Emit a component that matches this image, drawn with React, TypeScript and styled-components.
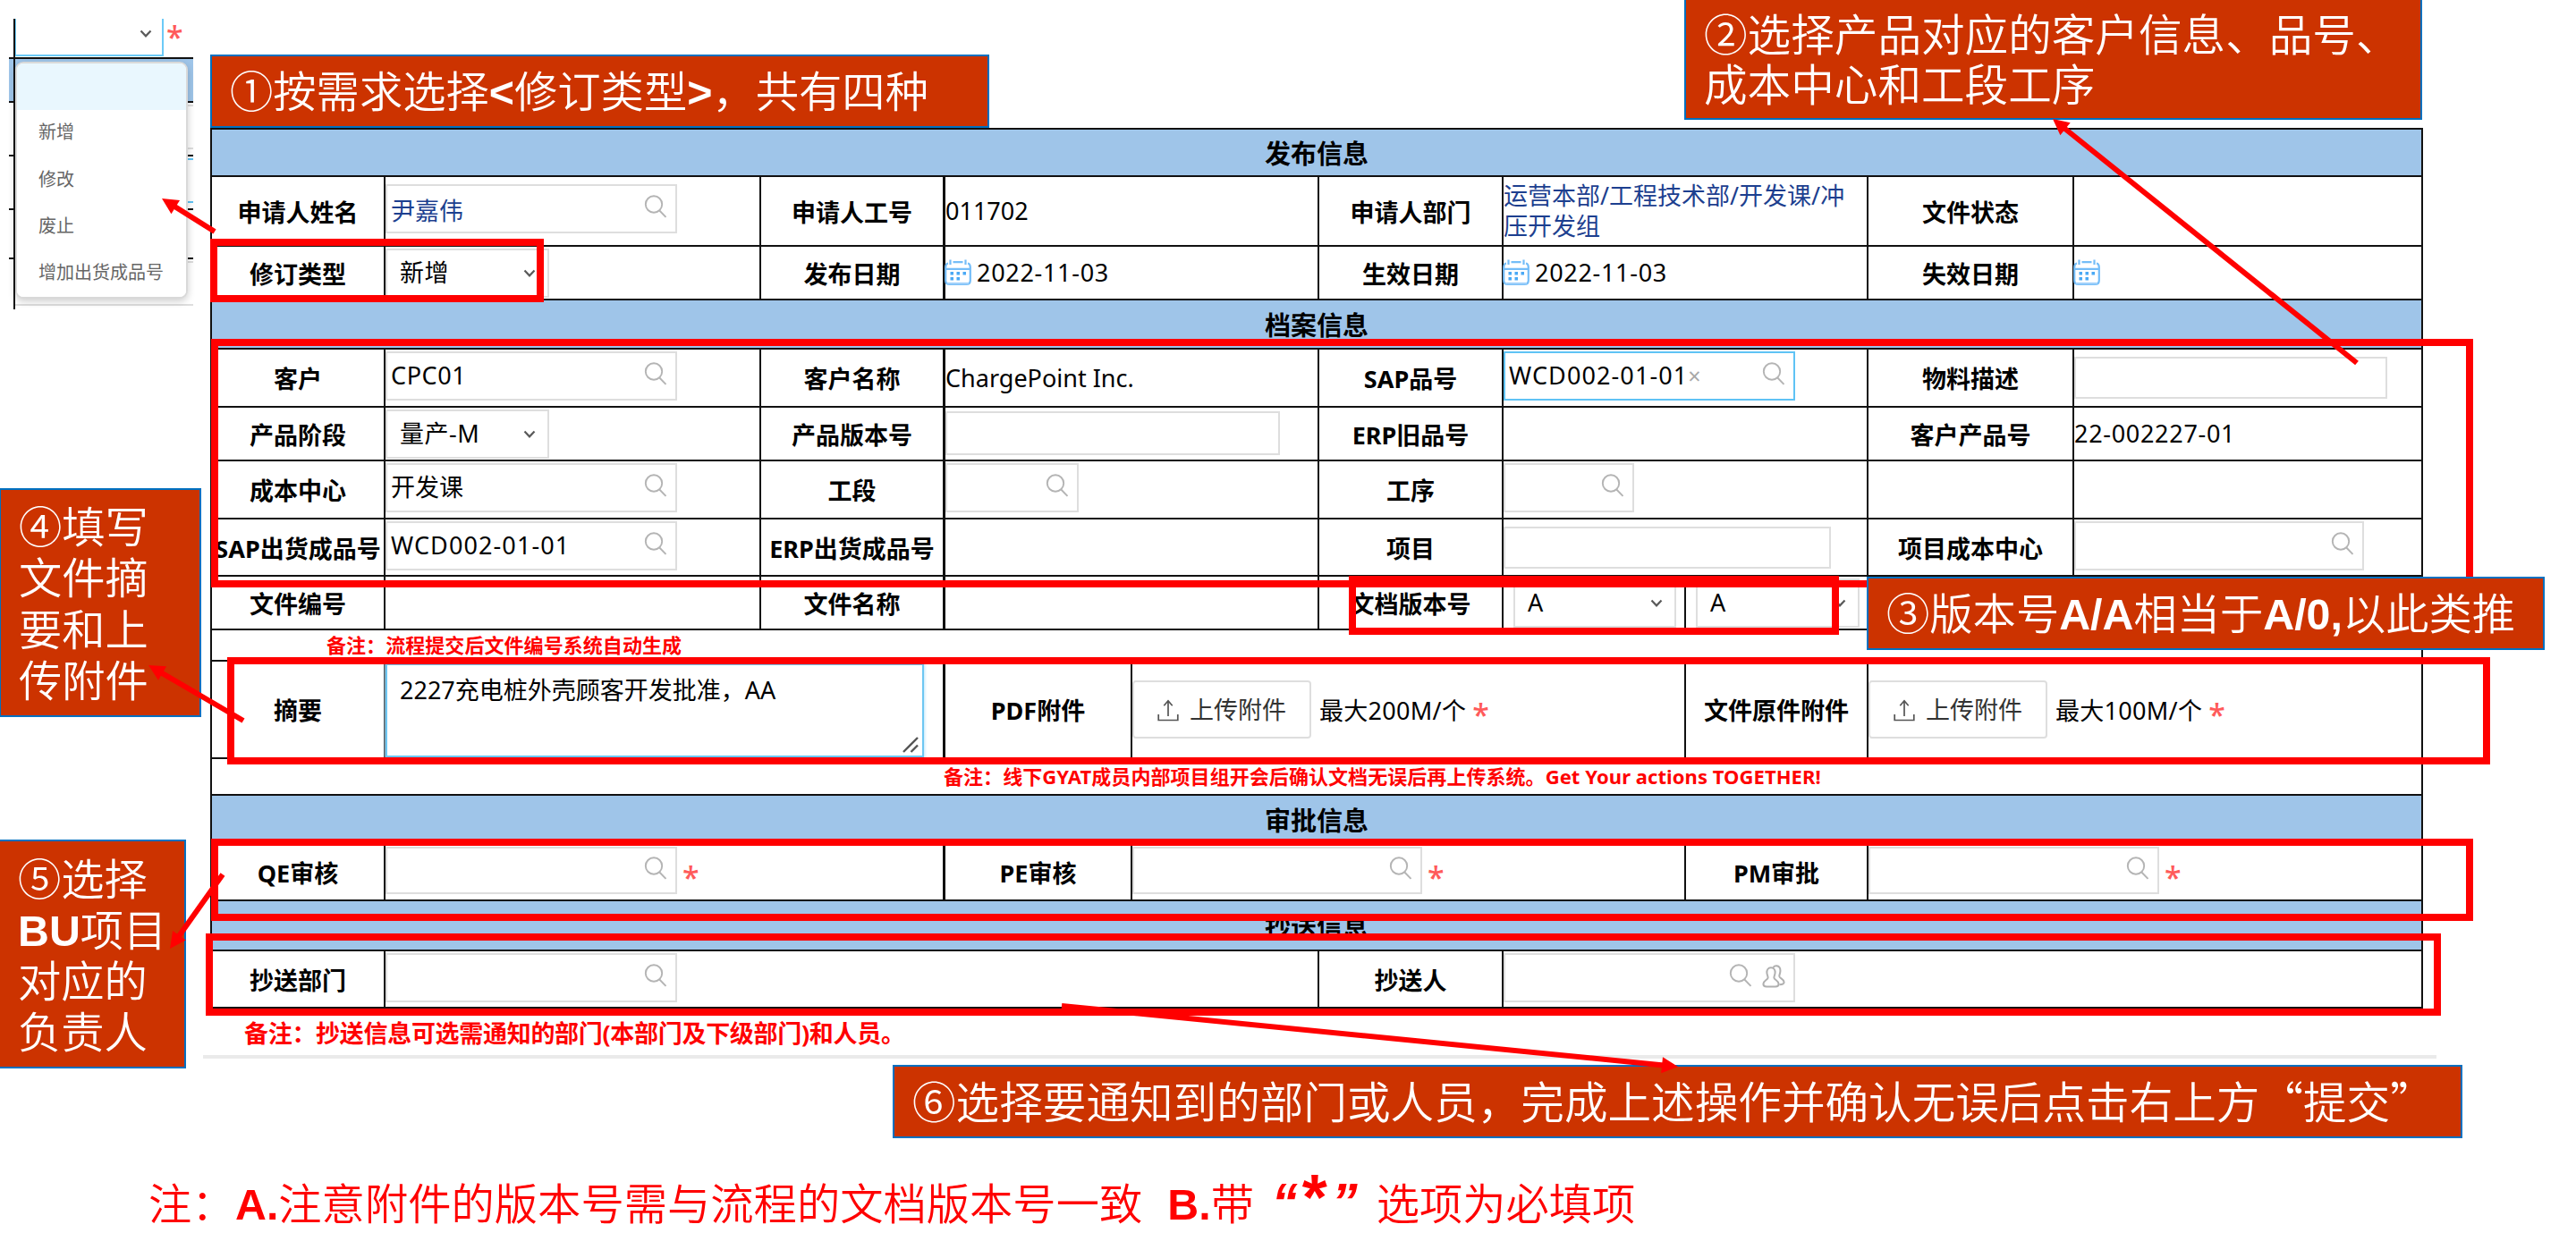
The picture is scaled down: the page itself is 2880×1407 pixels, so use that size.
import React from 'react';
import styled, { createGlobalStyle } from 'styled-components';

const GlobalStyle = createGlobalStyle`
  * { box-sizing: border-box; }
  body { margin: 0; background: #fff; }
`;

const FORM_FONT = `"Noto Sans", "Noto Sans CJK SC", sans-serif`;
const CJK_FONT = `"Noto Sans CJK SC", sans-serif`;
const RED = '#ff0000';
const BLUE_TEXT = '#1d3f8f';

const Page = styled.main`
  position: relative;
  width: 2880px;
  height: 1407px;
  overflow: hidden;
  padding: 143px 0 0 235px;
  font-family: ${FORM_FONT};
  font-size: 27px;
  line-height: 34px;
  color: #000;
  white-space: nowrap;
`;

/* ---------- form sheet ---------- */

const Sheet = styled.section`
  width: 2474px;
  border-left: 2px solid #111;
  border-top: 2px solid #111;
`;

const Row = styled.div<{ $h: number; $cols?: string }>`
  display: grid;
  grid-template-columns: ${(p) => p.$cols || '194px 420px 206px 418px 206px 408px 230px 390px'};
  height: ${(p) => p.$h}px;
`;

const Cell = styled.div<{ $line?: number; $color?: string }>`
  display: flex;
  align-items: center;
  min-width: 0;
  border-right: ${(p) => p.$line || 2}px solid #111;
  border-bottom: 2px solid #111;
  color: ${(p) => p.$color || '#000'};
`;

const Label = styled(Cell)`
  justify-content: center;
  padding-top: 3px;
  font-weight: 700;
`;

const Code = styled.span`
  letter-spacing: 0.7px;
`;

const Section = styled.h2<{ $h: number }>`
  display: flex;
  align-items: center;
  justify-content: center;
  margin: 0;
  padding-top: 3px;
  height: ${(p) => p.$h}px;
  background: #9fc5e9;
  border-right: 2px solid #111;
  border-bottom: 2px solid #111;
  font-size: 29px;
  font-weight: 700;
`;

const Remark = styled.div<{ $h: number; $gap: number }>`
  display: flex;
  align-items: center;
  height: ${(p) => p.$h}px;
  padding: 0 0 2px ${(p) => p.$gap}px;
  border-right: 2px solid #111;
  border-bottom: 2px solid #111;
  color: ${RED};
  font-size: 22px;
  font-weight: 700;
  letter-spacing: 0.06px;
`;

const Field = styled.div<{ $w: number; $h: number; $top: number; $left?: number; $focus?: boolean; $pad?: number }>`
  display: flex;
  align-self: flex-start;
  align-items: center;
  flex: none;
  width: ${(p) => p.$w}px;
  height: ${(p) => p.$h}px;
  margin-top: ${(p) => p.$top}px;
  margin-left: ${(p) => p.$left || 0}px;
  padding: 0 9px 0 ${(p) => p.$pad || 4}px;
  border: 2px solid ${(p) => (p.$focus ? '#5fc3f5' : '#dedede')};
  background: #fff;
`;

const Grow = styled.span<{ $color?: string; $dy?: number; $ls?: number }>`
  flex: 1;
  padding-top: ${(p) => p.$dy || 0}px;
  margin-bottom: 2px;
  color: ${(p) => p.$color || 'inherit'};
  letter-spacing: ${(p) => p.$ls || 0}px;
`;

const Clear = styled.span`
  color: #a8a8a8;
  font-size: 25px;
`;

const StarMark = styled.span<{ $left?: number; $top?: number }>`
  margin: ${(p) => p.$top ?? 11}px 0 0 ${(p) => p.$left ?? 6}px;
  color: #ff5a5a;
  font-size: 34px;
  font-weight: 500;
`;

const Star = ({ left, top }: { left?: number; top?: number }) => (
  <StarMark $left={left} $top={top}>*</StarMark>
);

const TextArea = styled.div`
  display: flex;
  align-self: flex-start;
  justify-content: space-between;
  align-items: flex-end;
  width: 602px;
  height: 105px;
  margin-top: 2px;
  padding: 11px 4px 3px 14px;
  border: 2px solid #6cc6f2;
  box-shadow: 0 0 3px 1px #bfe6fb;
`;

const AreaText = styled.span`
  align-self: flex-start;
`;

const Upload = styled.div`
  display: flex;
  align-items: center;
  gap: 12px;
  width: 200px;
  height: 65px;
  padding-left: 26px;
  margin-right: 9px;
  border: 2px solid #dedede;
  border-radius: 4px;
  color: #333;
`;

const Limit = styled.span`
  padding-top: 2px;
  letter-spacing: 0.3px;
`;

const Footnote = styled.div`
  width: 2497px;
  height: 56px;
  margin-left: -8px;
  padding: 11px 0 0 46px;
  border-bottom: 4px solid #eaeaea;
  color: ${RED};
  font-weight: 700;
  letter-spacing: -0.3px;
`;

/* ---------- drop-down excerpt ---------- */

const Excerpt = styled.aside`
  position: absolute;
  left: 10px;
  top: 21px;
  width: 206px;
  height: 325px;
`;

const ExcerptGrid = styled.div`
  display: grid;
  grid-template-rows: 45px 49px 60px 60px 55px 56px;
  grid-template-columns: 7px 199px;
`;

const Tile = styled.div<{ $fill?: string; $side?: boolean; $last?: boolean }>`
  border-right: ${(p) => (p.$side ? 2 : 0)}px solid #111;
  border-bottom: ${(p) => (p.$last ? 0 : 2)}px solid #111;
  background: ${(p) => p.$fill || '#fff'};
`;

const ExcerptSelect = styled(Tile)`
  display: flex;
`;

const OpenSelect = styled.div`
  display: flex;
  align-items: flex-start;
  justify-content: flex-end;
  width: 166px;
  height: 42px;
  padding: 12px 11px 0 0;
  border: solid #6ccaf7;
  border-width: 0 2px 2px 1px;
`;

const Slot = styled.div<{ $c: string; $h: number; $top: number }>`
  height: ${(p) => p.$h}px;
  margin-top: ${(p) => p.$top}px;
  border: solid ${(p) => p.$c};
  border-width: 2px 0;
`;

const Menu = styled.ul`
  position: absolute;
  left: 7px;
  top: 48px;
  width: 193px;
  height: 265px;
  margin: 0;
  padding: 0;
  list-style: none;
  overflow: hidden;
  border: 2px solid #d9d9d9;
  border-radius: 9px;
  background: #fff;
  box-shadow: 0 3px 8px rgba(0, 0, 0, 0.2);
  font-size: 20px;
  color: #666;
`;

const Item = styled.li<{ $on?: boolean }>`
  display: flex;
  align-items: center;
  height: 52.3px;
  padding: 0 0 2px 24px;
  background: ${(p) => (p.$on ? '#e9f7fe' : '#fff')};
`;

/* ---------- annotations laid over the form ---------- */

const Frame = styled.div<{ $x: number; $y: number; $r: number; $b: number }>`
  position: absolute;
  left: ${(p) => p.$x}px;
  top: ${(p) => p.$y}px;
  width: ${(p) => p.$r - p.$x}px;
  height: ${(p) => p.$b - p.$y}px;
  border: 8px solid ${RED};
`;

const Callout = styled.div<{ $x: number; $y: number; $r: number; $b: number; $lh?: number; $pt?: number; $fs?: number }>`
  position: absolute;
  left: ${(p) => p.$x}px;
  top: ${(p) => p.$y}px;
  width: ${(p) => p.$r - p.$x}px;
  height: ${(p) => p.$b - p.$y}px;
  padding: ${(p) => p.$pt || 8}px 0 0 20px;
  border: 2px solid #0070c0;
  background: #cc3300;
  color: #fff;
  font-family: ${CJK_FONT};
  font-size: ${(p) => p.$fs || 48.3}px;
  font-weight: 350;
  line-height: ${(p) => p.$lh || 57}px;
`;

const Latin = styled.b`
  font-family: "Liberation Sans", Arial, sans-serif;
  font-weight: 700;
  line-height: 1px;
`;

const Arrows = styled.svg`
  position: absolute;
  left: 0;
  top: 0;
`;

const BottomNote = styled.p`
  display: flex;
  align-items: baseline;
  margin: 129px 0 0 -69px;
  color: ${RED};
  font-family: ${CJK_FONT};
  font-size: 48.3px;
  font-weight: 350;
  line-height: 60px;
`;

const Part = styled.span<{ $w: number }>`
  width: ${(p) => p.$w}px;
`;

const Quote = styled(Latin)<{ $w: number }>`
  width: ${(p) => p.$w}px;
  font-style: italic;
  font-size: 58px;
`;

const BigStar = styled(Latin)`
  width: 33px;
  font-size: 72px;
`;

/* ---------- icons ---------- */

const SearchSvg = styled.svg`
  margin-bottom: 5px;
`;

const SearchIcon = () => (
  <SearchSvg width="26" height="26" viewBox="0 0 26 26" fill="none" stroke="#b4b4b4" strokeWidth="1.9">
    <circle cx="11" cy="10.5" r="9.2" />
    <path d="M17.3 17.5 L24.5 24.8" />
  </SearchSvg>
);

const Chevron = () => (
  <svg width="14" height="10" viewBox="0 0 14 10" fill="none" stroke="#5a5a5a" strokeWidth="2.2">
    <path d="M1.5 1.5 L7 7.3 L12.5 1.5" />
  </svg>
);

const CalendarSvg = styled.svg`
  margin: 0 6px 0 -1px;
`;

const CalendarIcon = () => (
  <CalendarSvg width="30" height="30" viewBox="0 0 30 30" fill="none" stroke="#74bdf8" strokeWidth="2.2">
    <path d="M4 4.5 Q1.2 5 1.2 9 V23.5 Q1.2 28 5.5 28 H24.5 Q28.8 28 28.8 23.5 V9 Q28.8 5 26 4.5" />
    <path d="M1.2 10.8 H28.8 M9.5 3.2 H20.5 M6.5 0.5 V6 M23.5 0.5 V6" />
    <path d="M3 27 H27" stroke="#9fd0fa" />
    <g fill="#4aa9f5" stroke="none">
      <rect x="6.5" y="14" width="3.5" height="3.5" />
      <rect x="13.5" y="14" width="3.5" height="3.5" />
      <rect x="20.5" y="14" width="3.5" height="3.5" />
      <rect x="6.5" y="20" width="3.5" height="3.5" />
      <rect x="13.5" y="20" width="3.5" height="3.5" />
    </g>
  </CalendarSvg>
);

const UploadIcon = () => (
  <svg width="24" height="26" viewBox="0 0 24 26" fill="none" stroke="#555" strokeWidth="1.7">
    <path d="M1.2 18 V24.5 H22.8 V18" />
    <path d="M12 20 V3 M7.3 8.2 L12 2.8 L16.7 8.2" />
  </svg>
);

const PeopleIcon = () => (
  <svg width="26" height="26" viewBox="0 0 26 26" fill="none" stroke="#b0b0b0" strokeWidth="2">
    <path d="M10 3.2 C6.6 3.2 5.2 6 5.4 9 C5.6 11.6 6.6 12.6 6.6 14.6 C6.4 16.8 1.4 17.6 1.4 21.5 C1.4 24.4 3 24.6 5 24.6 H15 C17.2 24.6 18.6 24.2 18.6 21.5 C18.6 17.6 13.6 16.8 13.4 14.6 C13.4 12.6 14.4 11.6 14.6 9 C14.8 6 13.4 3.2 10 3.2 Z" />
    <path d="M12.5 3 C13.4 1.6 14.8 1 16.4 1.2 C19.6 1.6 20.6 4.4 20.4 7.4 C20.2 10 19.2 11 19.3 13 C19.5 15.2 24.6 16 24.6 19.6 C24.6 21.6 23.4 22.2 19.5 22.2" />
  </svg>
);

const Grip = () => (
  <svg width="18" height="18" viewBox="0 0 18 18" stroke="#555" strokeWidth="2.4">
    <path d="M1 17 L17 1 M9.5 17 L17 9.5" />
  </svg>
);

const People = styled.span`
  display: flex;
  margin: 0 0 4px 11px;
`;

const Search = ({ w = 326, h = 55, top = 2, value, color, clear, focus, people, dy, ls }: {
  w?: number; h?: number; top?: number; value?: string; color?: string;
  clear?: boolean; focus?: boolean; people?: boolean; dy?: number; ls?: number;
}) => (
  <Field $w={w} $h={h} $top={top} $focus={focus}>
    <Grow $color={color} $dy={dy} $ls={ls}>
      {value}
      {clear && <Clear>×</Clear>}
    </Grow>
    <SearchIcon />
    {people && <People><PeopleIcon /></People>}
  </Field>
);

const Tail = styled.i`
  width: 4px;
`;

const Select = ({ value, w = 183, left = 0 }: { value: string; w?: number; left?: number }) => (
  <Field $w={w} $h={55} $top={2} $left={left} $pad={14}>
    <Grow $ls={0.5}>{value}</Grow>
    <Chevron />
    <Tail />
  </Field>
);

const Arrow = ({ x1, y1, x2, y2 }: { x1: number; y1: number; x2: number; y2: number }) => {
  const d = Math.hypot(x2 - x1, y2 - y1);
  const ux = (x2 - x1) / d;
  const uy = (y2 - y1) / d;
  const bx = x2 - ux * 18;
  const by = y2 - uy * 18;
  return (
    <g>
      <path d={`M${x1} ${y1} L${bx + ux * 2} ${by + uy * 2}`} stroke={RED} strokeWidth="6" />
      <path d={`M${x2} ${y2} L${bx - uy * 9} ${by + ux * 9} L${bx + uy * 9} ${by - ux * 9} Z`} fill={RED} />
    </g>
  );
};

const WIDE = '194px 626px 209px 619px 204px 620px';

export default function App() {
  return (
    <Page>
      <GlobalStyle />
      <Sheet>
        <Section $h={53}>发布信息</Section>
        <Row $h={78}>
          <Label>申请人姓名</Label>
          <Cell><Search top={8} value="尹嘉伟" color={BLUE_TEXT} dy={6} /></Cell>
          <Label $line={3}>申请人工号</Label>
          <Cell>011702</Cell>
          <Label>申请人部门</Label>
          <Cell $color={BLUE_TEXT}>运营本部/工程技术部/开发课/冲<br />压开发组</Cell>
          <Label>文件状态</Label>
          <Cell />
        </Row>
        <Row $h={60}>
          <Label>修订类型</Label>
          <Cell><Select value="新增" /></Cell>
          <Label $line={3}>发布日期</Label>
          <Cell><CalendarIcon /><Code>2022-11-03</Code></Cell>
          <Label>生效日期</Label>
          <Cell><CalendarIcon /><Code>2022-11-03</Code></Cell>
          <Label>失效日期</Label>
          <Cell><CalendarIcon /></Cell>
        </Row>
        <Section $h={55}>档案信息</Section>
        <Row $h={65}>
          <Label>客户</Label>
          <Cell><Search value="CPC01" ls={0.6} /></Cell>
          <Label $line={3}>客户名称</Label>
          <Cell>ChargePoint Inc.</Cell>
          <Label>SAP品号</Label>
          <Cell><Search value="WCD002-01-01" clear focus ls={1.1} /></Cell>
          <Label>物料描述</Label>
          <Cell><Field $w={350} $h={47} $top={8} /></Cell>
        </Row>
        <Row $h={60}>
          <Label>产品阶段</Label>
          <Cell><Select value="量产-M" /></Cell>
          <Label $line={3}>产品版本号</Label>
          <Cell><Field $w={374} $h={49} $top={4} /></Cell>
          <Label>ERP旧品号</Label>
          <Cell />
          <Label>客户产品号</Label>
          <Cell><Code>22-002227-01</Code></Cell>
        </Row>
        <Row $h={65}>
          <Label>成本中心</Label>
          <Cell><Search value="开发课" /></Cell>
          <Label $line={3}>工段</Label>
          <Cell><Search w={149} /></Cell>
          <Label>工序</Label>
          <Cell><Search w={146} /></Cell>
          <Label />
          <Cell />
        </Row>
        <Row $h={64}>
          <Label>SAP出货成品号</Label>
          <Cell><Search value="WCD002-01-01" ls={1.1} /></Cell>
          <Label $line={3}>ERP出货成品号</Label>
          <Cell />
          <Label>项目</Label>
          <Cell><Field $w={366} $h={47} $top={8} /></Cell>
          <Label>项目成本中心</Label>
          <Cell><Search w={324} /></Cell>
        </Row>
        <Row $h={60} $cols="194px 420px 206px 418px 206px 204px 204px 620px">
          <Label>文件编号</Label>
          <Cell />
          <Label $line={3}>文件名称</Label>
          <Cell />
          <Label>文档版本号</Label>
          <Cell><Select value="A" left={11} w={182} /></Cell>
          <Cell><Select value="A" left={11} /></Cell>
          <Cell />
        </Row>
        <Remark $h={35} $gap={128}>备注：流程提交后文件编号系统自动生成</Remark>
        <Row $h={109} $cols={WIDE}>
          <Label>摘要</Label>
          <Cell $line={3}>
            <TextArea>
              <AreaText>2227充电桩外壳顾客开发批准，AA</AreaText>
              <Grip />
            </TextArea>
          </Cell>
          <Label>PDF附件</Label>
          <Cell>
            <Upload><UploadIcon />上传附件</Upload>
            <Limit>最大200M/个</Limit>
            <Star left={7} />
          </Cell>
          <Label>文件原件附件</Label>
          <Cell>
            <Upload><UploadIcon />上传附件</Upload>
            <Limit>最大100M/个</Limit>
            <Star left={7} />
          </Cell>
        </Row>
        <Remark $h={41} $gap={818}>备注：线下GYAT成员内部项目组开会后确认文档无误后再上传系统。Get Your actions TOGETHER!</Remark>
        <Section $h={54}>审批信息</Section>
        <Row $h={64} $cols={WIDE}>
          <Label>QE审核</Label>
          <Cell $line={3}><Search h={53} top={3} /><Star /></Cell>
          <Label>PE审核</Label>
          <Cell><Search h={53} top={3} w={324} /><Star /></Cell>
          <Label>PM审批</Label>
          <Cell><Search h={53} top={3} w={325} /><Star /></Cell>
        </Row>
        <Section $h={56}>抄送信息</Section>
        <Row $h={64} $cols="194px 1044px 206px 1028px">
          <Label>抄送部门</Label>
          <Cell><Search /></Cell>
          <Label>抄送人</Label>
          <Cell><Search people /></Cell>
        </Row>
      </Sheet>
      <Footnote>备注：抄送信息可选需通知的部门(本部门及下级部门)和人员。</Footnote>

      <BottomNote>
        <Part $w={97}>注：</Part>
        <Latin>A.</Latin>
        <Part $w={994}>注意附件的版本号需与流程的文档版本号一致</Part>
        <Latin>B.</Latin>
        <Part $w={68}>带</Part>
        <Quote $w={34}>“</Quote>
        <BigStar>*</BigStar>
        <Quote $w={50}>”</Quote>
        <span>选项为必填项</span>
      </BottomNote>

      <Excerpt>
        <ExcerptGrid>
          <Tile $side />
          <ExcerptSelect>
            <OpenSelect><Chevron /></OpenSelect>
            <Star left={3} top={3} />
          </ExcerptSelect>
          <Tile $side $fill="#9fc5e9" />
          <Tile $fill="#9fc5e9" />
          <Tile $side />
          <Tile><Slot $c="#dedede" $h={50} $top={2} /></Tile>
          <Tile $side />
          <Tile><Slot $c="#5fc3f5" $h={50} $top={2} /></Tile>
          <Tile $side />
          <Tile />
          <Tile $side $last />
          <Tile $last><Slot $c="#dedede" $h={50} $top={2} /></Tile>
        </ExcerptGrid>
        <Menu>
          <Item $on />
          <Item>新增</Item>
          <Item>修改</Item>
          <Item>废止</Item>
          <Item>增加出货成品号</Item>
        </Menu>
      </Excerpt>

      <Frame $x={235} $y={267} $r={608} $b={338} />
      <Frame $x={236} $y={379} $r={2765} $b={657} />
      <Frame $x={1508} $y={644} $r={2056} $b={710} />
      <Frame $x={254} $y={735} $r={2784} $b={855} />
      <Frame $x={236} $y={938} $r={2765} $b={1030} />
      <Frame $x={230} $y={1044} $r={2729} $b={1136} />

      <Callout $x={235} $y={61} $r={1106} $b={143}>
        ①按需求选择<Latin>&lt;</Latin>修订类型<Latin>&gt;</Latin>，共有四种
      </Callout>
      <Callout $x={1883} $y={-6} $r={2708} $b={134} $lh={55.6} $pt={13} $fs={48.6}>
        ②选择产品对应的客户信息、品号、<br />成本中心和工段工序
      </Callout>
      <Callout $x={2087} $y={645} $r={2845} $b={727}>
        ③版本号<Latin>A/A</Latin>相当于<Latin>A/0,</Latin>以此类推
      </Callout>
      <Callout $x={-1} $y={546} $r={225} $b={802} $lh={57.3} $pt={10}>
        ④填写<br />文件摘<br />要和上<br />传附件
      </Callout>
      <Callout $x={-2} $y={939} $r={208} $b={1195} $pt={11}>
        ⑤选择<br /><Latin>BU</Latin>项目<br />对应的<br />负责人
      </Callout>
      <Callout $x={998} $y={1191} $r={2753} $b={1273} $pt={9} $fs={48.6}>
        ⑥选择要通知到的部门或人员，完成上述操作并确认无误后点击右上方“提交”
      </Callout>

      <Arrows width="2880" height="1407" viewBox="0 0 2880 1407">
        <Arrow x1={240} y1={259} x2={181} y2={222} />
        <Arrow x1={2635} y1={406} x2={2295} y2={133} />
        <Arrow x1={272} y1={806} x2={166} y2={744} />
        <Arrow x1={249} y1={978} x2={190} y2={1061} />
        <Arrow x1={1187} y1={1125} x2={1876} y2={1193} />
      </Arrows>
    </Page>
  );
}
